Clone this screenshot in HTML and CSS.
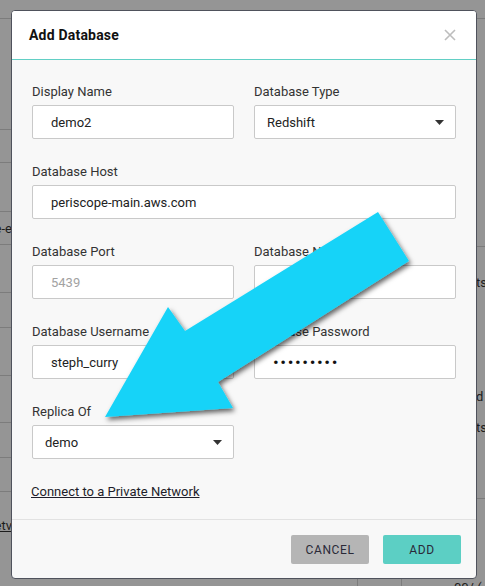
FILE: index.html
```html
<!DOCTYPE html>
<html lang="en">
<head>
<meta charset="UTF-8">
<meta name="viewport" content="width=device-width, initial-scale=1.0">
<title>Add Database</title>
<link rel="stylesheet" href="styles.css">
</head>
<body>

<!-- page behind the overlay -->
<div class="page">
    <div class="page-main">
        <div class="strip strip-left">
            <div class="bg-row" style="height:19px"></div>
            <div class="bg-row" style="height:111px"></div>
            <div class="bg-row" style="height:33px"></div>
            <div class="bg-row" style="height:49px"></div>
            <div class="bg-row bg-text" style="height:33px">site-e</div>
            <div class="bg-row" style="height:48px"></div>
            <div class="bg-row" style="height:35px"></div>
            <div class="bg-row" style="height:48px"></div>
            <div class="bg-row" style="height:47px"></div>
            <div class="bg-row" style="height:35px"></div>
            <div class="bg-row" style="height:34px"></div>
            <div class="bg-row bg-text bg-link" style="height:66px">Private Netv</div>
        </div>
        <div class="strip strip-right">
            <div class="bg-row" style="height:19px"></div>
            <div class="bg-row" style="height:228px"></div>
            <div class="bg-row bg-text no-line" style="height:70px">ts</div>
            <div class="bg-row no-line" style="height:64px"></div>
            <div class="bg-row bg-text no-line" style="height:30px">d</div>
            <div class="bg-row bg-text no-line" style="height:32px">ts</div>
            <div class="bg-row" style="height:56px"></div>
        </div>
    </div>
    <div class="page-bottom">
        <div class="bottom-cell" style="width:357px"></div>
        <div class="bottom-cell" style="width:43px"></div>
        <div class="bottom-cell bottom-text">00/ (</div>
    </div>
</div>

<div class="modal">
    <div class="modal-header">
        <h2>Add Database</h2>
        <svg class="close" width="12" height="12" viewBox="0 0 12 12">
            <path d="M1 1 L11 11 M11 1 L1 11" stroke="#bdbdbd" stroke-width="1.6" fill="none"/>
        </svg>
    </div>

    <div class="modal-body">
        <div class="fields">
            <div class="field">
                <label for="name">Display Name</label>
                <input type="text" id="name" value="demo2">
            </div>
            <div class="field">
                <label>Database Type</label>
                <div class="select">
                    <span>Redshift</span>
                    <svg width="9" height="5" viewBox="0 0 9 5"><path d="M0 0 H9 L4.5 5 Z" fill="#333"/></svg>
                </div>
            </div>
            <div class="field wide">
                <label for="host">Database Host</label>
                <input type="text" id="host" value="periscope-main.aws.com">
            </div>
            <div class="field">
                <label for="port">Database Port</label>
                <input type="text" id="port" placeholder="5439">
            </div>
            <div class="field">
                <label for="dbname">Database Name</label>
                <input type="text" id="dbname">
            </div>
            <div class="field">
                <label for="user">Database Username</label>
                <input type="text" id="user" value="steph_curry">
            </div>
            <div class="field">
                <label for="pass">Database Password</label>
                <input type="password" id="pass" value="abcdefghi">
            </div>
            <div class="field">
                <label>Replica Of</label>
                <div class="select">
                    <span>demo</span>
                    <svg width="9" height="5" viewBox="0 0 9 5"><path d="M0 0 H9 L4.5 5 Z" fill="#333"/></svg>
                </div>
            </div>
        </div>
        <a class="network-link" href="#">Connect to a Private Network</a>
    </div>

    <div class="modal-footer">
        <button class="btn btn-cancel">Cancel</button>
        <button class="btn btn-add">Add</button>
    </div>
</div>

<!-- annotation arrow drawn over the dialog -->
<svg class="arrow" width="485" height="586" viewBox="0 0 485 586">
    <defs>
        <filter id="shadow" x="-10%" y="-10%" width="130%" height="130%">
            <feDropShadow dx="2" dy="3" stdDeviation="2.5" flood-color="#000" flood-opacity="0.6"/>
        </filter>
    </defs>
    <polygon points="378,212 409,261 218,382 233,408 105,417 168,307 185,331" fill="#19d3f8" filter="url(#shadow)"/>
</svg>

</body>
</html>
```

FILE: styles.css
```css
/* Add Database dialog over a dimmed page */
body {
    margin: 0;
    font-family: Roboto, "Liberation Sans", sans-serif;
    width: 485px;
    height: 586px;
    overflow: hidden;
    position: relative;
    background: #959595;
}

/* dimmed page */
.page {
    height: 586px;
    display: flex;
    flex-direction: column;
}
.page-main {
    flex: 1;
    display: flex;
    justify-content: space-between;
}
.strip {
    display: flex;
    flex-direction: column;
    overflow: hidden;
}
.strip-left {
    width: 12px;
}
.strip-right {
    width: 9px;
}
.bg-row {
    box-sizing: border-box;
    border-bottom: 1px solid #7c7c7c;
    font-size: 13px;
    color: #1c1c1c;
    white-space: nowrap;
    flex-shrink: 0;
}
.bg-row.no-line {
    border-bottom: none;
}
.bg-text {
    display: flex;
    align-items: center;
}
.strip-left .bg-text {
    justify-content: flex-end;
}
.bg-link {
    text-decoration: underline;
    border-bottom: none;
}
.page-bottom {
    height: 7px;
    display: flex;
    overflow: hidden;
}
.bottom-cell {
    border-right: 1px solid #7c7c7c;
    flex-shrink: 0;
}
.bottom-text {
    border: none;
    padding-left: 52px;
    font-size: 13px;
    line-height: 13px;
    margin-top: 2px;
    color: #1c1c1c;
    white-space: nowrap;
}

/* dialog */
.modal {
    position: absolute;
    top: 10px;
    left: 11px;
    width: 466px;
    box-sizing: border-box;
    border: 1px solid #4f525c;
    border-radius: 4px;
    background: #f8f8f8;
    overflow: hidden;
}
.modal-header {
    height: 48px;
    background: #fff;
    border-bottom: 1px solid #62cfc5;
    display: flex;
    align-items: center;
    justify-content: space-between;
    padding: 0 20px 0 17px;
}
.modal-header h2 {
    margin: 0;
    font-size: 14px;
    font-weight: 700;
    color: #111;
    letter-spacing: 0.2px;
}
.modal-body {
    padding: 23px 20px 19px;
    border-bottom: 1px solid #e2e2e2;
}
.fields {
    display: grid;
    grid-template-columns: 202px 202px;
    column-gap: 20px;
    row-gap: 24px;
}
.field {
    display: flex;
    flex-direction: column;
}
.field.wide {
    grid-column: span 2;
}
label {
    font-size: 13px;
    line-height: 17px;
    margin-bottom: 5px;
    color: #333;
}
input[type="text"], input[type="password"], .select {
    height: 34px;
    box-sizing: border-box;
    border: 1px solid #c9c9c9;
    border-radius: 2px;
    background: #fff;
    font-family: Roboto, "Liberation Sans", sans-serif;
    font-size: 13px;
    color: #222;
    padding: 0 18px;
    outline: none;
}
input::placeholder {
    color: #a2a2a2;
}
input[type="password"] {
    font-size: 17px;
    letter-spacing: 1.6px;
    color: #111;
}
.select {
    display: flex;
    align-items: center;
    justify-content: space-between;
    padding: 0 11px 0 12px;
}
.network-link {
    display: block;
    width: max-content;
    margin-top: 24px;
    margin-left: -1px;
    font-size: 13px;
    line-height: 17px;
    color: #1e1e2a;
}

.modal-footer {
    display: flex;
    justify-content: flex-end;
    gap: 14px;
    padding: 15px 15px 14px;
}
.btn {
    width: 78px;
    height: 29px;
    border: none;
    border-radius: 2px;
    font-family: Roboto, "Liberation Sans", sans-serif;
    font-size: 12px;
    letter-spacing: 0.6px;
    text-transform: uppercase;
    color: #2a2a38;
    cursor: pointer;
}
.btn-cancel {
    background-color: #b5b5b5;
}
.btn-add {
    background-color: #5ccfc4;
}

.arrow {
    position: absolute;
    top: 0;
    left: 0;
}
```
